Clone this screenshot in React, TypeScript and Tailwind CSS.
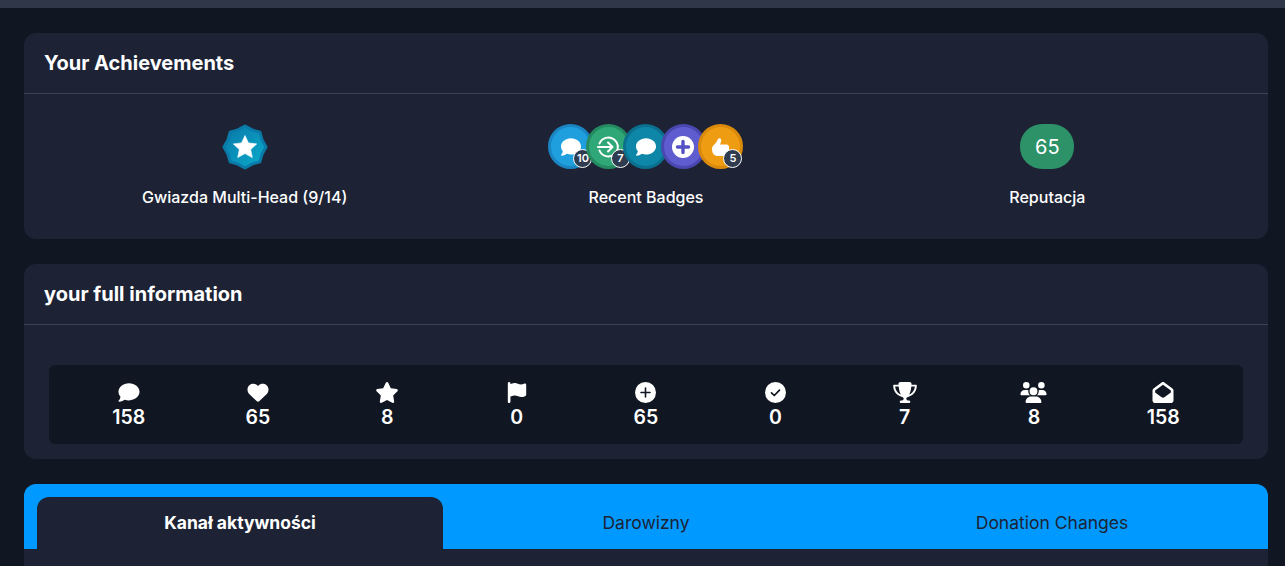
import React from "react";
import { FaComment, FaHeart, FaStar, FaFlag, FaTrophy, FaUsers, FaEnvelopeOpen } from "react-icons/fa6";

function CirclePlus({ className }: { className?: string }) {
  return (
    <svg viewBox="0 0 21 21" className={className}>
      <circle cx="10.5" cy="10.500" r="10.5" fill="white" />
      <path d="M10.5 6v9M6 10.5h9" stroke="#111722" strokeWidth="1.6" strokeLinecap="round" />
    </svg>
  );
}

function CircleCheck({ className }: { className?: string }) {
  return (
    <svg viewBox="0 0 21 21" className={className}>
      <circle cx="10.5" cy="10.5" r="10.5" fill="white" />
      <path d="M6.5 10.8l2.8 2.700 5.200-5.400" fill="none" stroke="#111722" strokeWidth="1.7" strokeLinecap="round" strokeLinejoin="round" />
    </svg>
  );
}

const stats: [React.ComponentType<{ className?: string }>, string, string][] = [
  [FaComment, "158", "w-[22px] h-[21px]"],
  [FaHeart, "65", "w-[22px] h-[21px]"],
  [FaStar, "8", "w-[24px] h-[21px]"],
  [FaFlag, "0", "w-[20px] h-[21px]"],
  [CirclePlus, "65", "w-[21px] h-[21px]"],
  [CircleCheck, "0", "w-[21px] h-[21px]"],
  [FaTrophy, "7", "w-[24px] h-[21px]"],
  [FaUsers, "8", "w-[27px] h-[21px]"],
  [FaEnvelopeOpen, "158", "w-[22px] h-[21px]"],
];

function Arrow() {
  return (
    <svg viewBox="0 0 24 24" className="w-[24px] h-[24px]" fill="none" stroke="white" strokeWidth="2" strokeLinecap="round" strokeLinejoin="round">
      <path d="M3.5 8.5A9.5 9.5 0 1 1 3.5 15.5" />
      <path d="M2 12h14" />
      <path d="M12 7.5l4.5 4.500-4.500 4.500" />
    </svg>
  );
}

function Badge({ bg, border, children, count }: { bg: string; border: string; children: React.ReactNode; count?: string }) {
  return (
    <div className={`relative w-[45px] h-[45px] rounded-full border-[3px] flex items-center justify-center shrink-0 ml-[-7.5px] first:ml-0 ${bg} ${border}`}>
      {children}
      {count && (
        <span className="absolute right-[-2px] bottom-[-2px] w-[19px] h-[19px] rounded-full bg-[#2f3b4f] border border-white text-white text-[11px] font-semibold flex items-center justify-center overflow-hidden">
          {count}
        </span>
      )}
    </div>
  );
}

function Card({ title, children }: { title: string; children: React.ReactNode }) {
  return (
    <section className="bg-[#1d2335] rounded-xl">
      <h2 className="h-[61px] px-5 flex items-center border-b border-[#3d4354] text-white text-[20px] font-bold">{title}</h2>
      {children}
    </section>
  );
}

const starPoints = Array.from({ length: 16 }, (_, i) => {
  const r = i % 2 === 0 ? 21 : 18.5;
  const a = (i * Math.PI) / 8 - Math.PI / 2;
  return `${(23 + r * Math.cos(a)).toFixed(2)},${(23 + r * Math.sin(a)).toFixed(2)}`;
}).join(" ");

export default function App() {
  return (
    <div className="h-[566px] overflow-hidden bg-[#111722] text-white" style={{ fontFamily: "Inter, 'Noto Sans', sans-serif" }}>
      <div className="h-2 bg-[#2f3749]" />
      <main className="ml-6 mr-[17px] mt-[25px] flex flex-col gap-[25px]">
        <Card title="Your Achievements">
          <div className="grid grid-cols-3 px-5 pt-[30px] h-[145px]">
            <div className="flex flex-col items-center">
              <svg viewBox="0 0 46 46" className="w-[46px] h-[46px]">
                <defs>
                  <linearGradient id="b" x1="0" y1="0" x2="1" y2="1">
                    <stop offset="0" stopColor="#0a78a8" />
                    <stop offset="1" stopColor="#0aaccc" />
                  </linearGradient>
                </defs>
                <polygon points={starPoints} fill="url(#b)" stroke="#0a7aa8" strokeWidth="3" strokeLinejoin="round" />
                <path d="M23 11.5l3.5 7.4 8.2 1-6 5.600 1.600 8.100-7.300-4-7.300 4 1.600-8.100-6-5.600 8.200-1z" fill="white" stroke="white" strokeWidth="0.6" strokeLinejoin="round" />
              </svg>
              <span className="mt-[17px] text-[16px] font-medium leading-[20px]">Gwiazda Multi-Head (9/14)</span>
            </div>
            <div className="flex flex-col items-center">
              <div className="flex h-[46px] items-start">
                <Badge bg="bg-[#1f9fde]" border="border-[#1a85c0]" count="10"><FaComment className="text-white text-[20px]" /></Badge>
                <Badge bg="bg-[#2fa776]" border="border-[#258a62]" count="7"><Arrow /></Badge>
                <Badge bg="bg-[#0e86a8]" border="border-[#0b708e]"><FaComment className="text-white text-[20px]" /></Badge>
                <Badge bg="bg-[#5e5ccf]" border="border-[#4a48b0]">
                  <svg viewBox="0 0 22 22" className="w-[22px] h-[22px]">
                    <circle cx="11" cy="11" r="11" fill="white" />
                    <path d="M11 5.500v11M5.500 11h11" stroke="#5450c4" strokeWidth="3.4" strokeLinecap="round" />
                  </svg>
                </Badge>
                <Badge bg="bg-[#ee9c12]" border="border-[#d98a0c]" count="5">
                  <svg viewBox="0 0 20 20" className="w-[20px] h-[20px]" fill="white">
                    <path d="M1 12c0-2 1-3.500 2.500-4.500C5 6 6 4 7 2c.5-1 2.500-1.200 3 .2.500 1.300 0 3-1 5.300h6.500c1.500 0 2.500 1 2.500 2.500v5c0 2.500-1.500 4-4 4H7c-3.500 0-6-2.500-6-7z" />
                  </svg>
                </Badge>
              </div>
              <span className="mt-[17px] text-[16px] font-medium leading-[20px]">Recent Badges</span>
            </div>
            <div className="flex flex-col items-center">
              <div className="w-[54px] h-[45px] rounded-[22px] bg-[#2d9268] flex items-center justify-center text-[20px]">65</div>
              <span className="mt-[18px] text-[16px] font-medium leading-[20px]">Reputacja</span>
            </div>
          </div>
        </Card>
        <Card title="your full information">
          <div className="px-[25px] pt-10 pb-[15px]">
            <div className="h-[79px] bg-[#111722] rounded-md px-[15px] grid grid-cols-9 items-center">
              {stats.map(([Icon, v, size], i) => (
                <div key={i} className="flex flex-col items-center">
                  <Icon className={`text-white ${size}`} />
                  <span className="mt-[3px] text-[19.5px] leading-[22px] font-semibold">{v}</span>
                </div>
              ))}
            </div>
          </div>
        </Card>
        <section className="rounded-t-xl bg-[#0099ff] h-[200px]">
          <div className="flex px-[13px] pt-[13px]">
            <div className="flex-1 h-[52px] rounded-t-xl bg-[#1d2335] flex items-center justify-center text-[17.5px] font-bold text-white">Kanał aktywności</div>
            <div className="flex-1 h-[52px] flex items-center justify-center text-[17.5px] text-[#1d2335]">Darowizny</div>
            <div className="flex-1 h-[52px] flex items-center justify-center text-[17.5px] text-[#1d2335]">Donation Changes</div>
          </div>
          <div className="h-[135px] bg-[#1d2335]" />
        </section>
      </main>
    </div>
  );
}
